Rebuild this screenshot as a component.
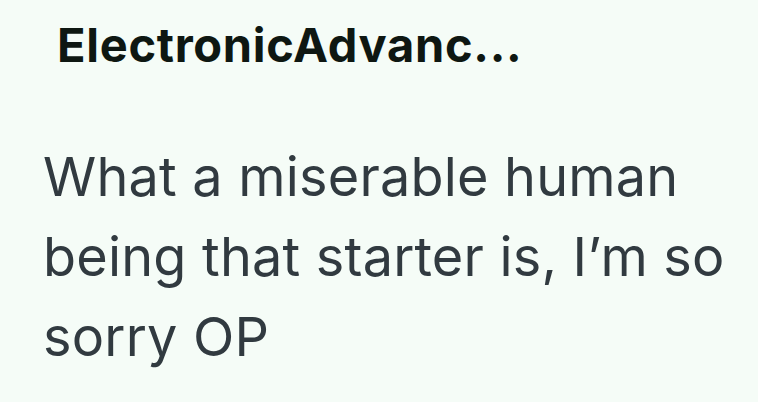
export default function App(): JSX.Element {
  return (
    <div
      className="w-[758px] h-[402px] overflow-hidden bg-[#f5fcf7] text-[#313a40]"
      style={{ fontFamily: "Inter, 'Noto Sans', sans-serif" }}
    >
      <div className="pl-[57px] pt-[17px] text-[47px] leading-[56px] font-bold text-[#0e1712] tracking-[0.7px]">
        ElectronicAdvanc...
      </div>
      <p className="pl-[43px] pr-[10px] mt-[64px] text-[54px] leading-[80px] font-normal tracking-[0.2px]">
        What a miserable human being that starter is, I’m so sorry OP
      </p>
    </div>
  );
}
